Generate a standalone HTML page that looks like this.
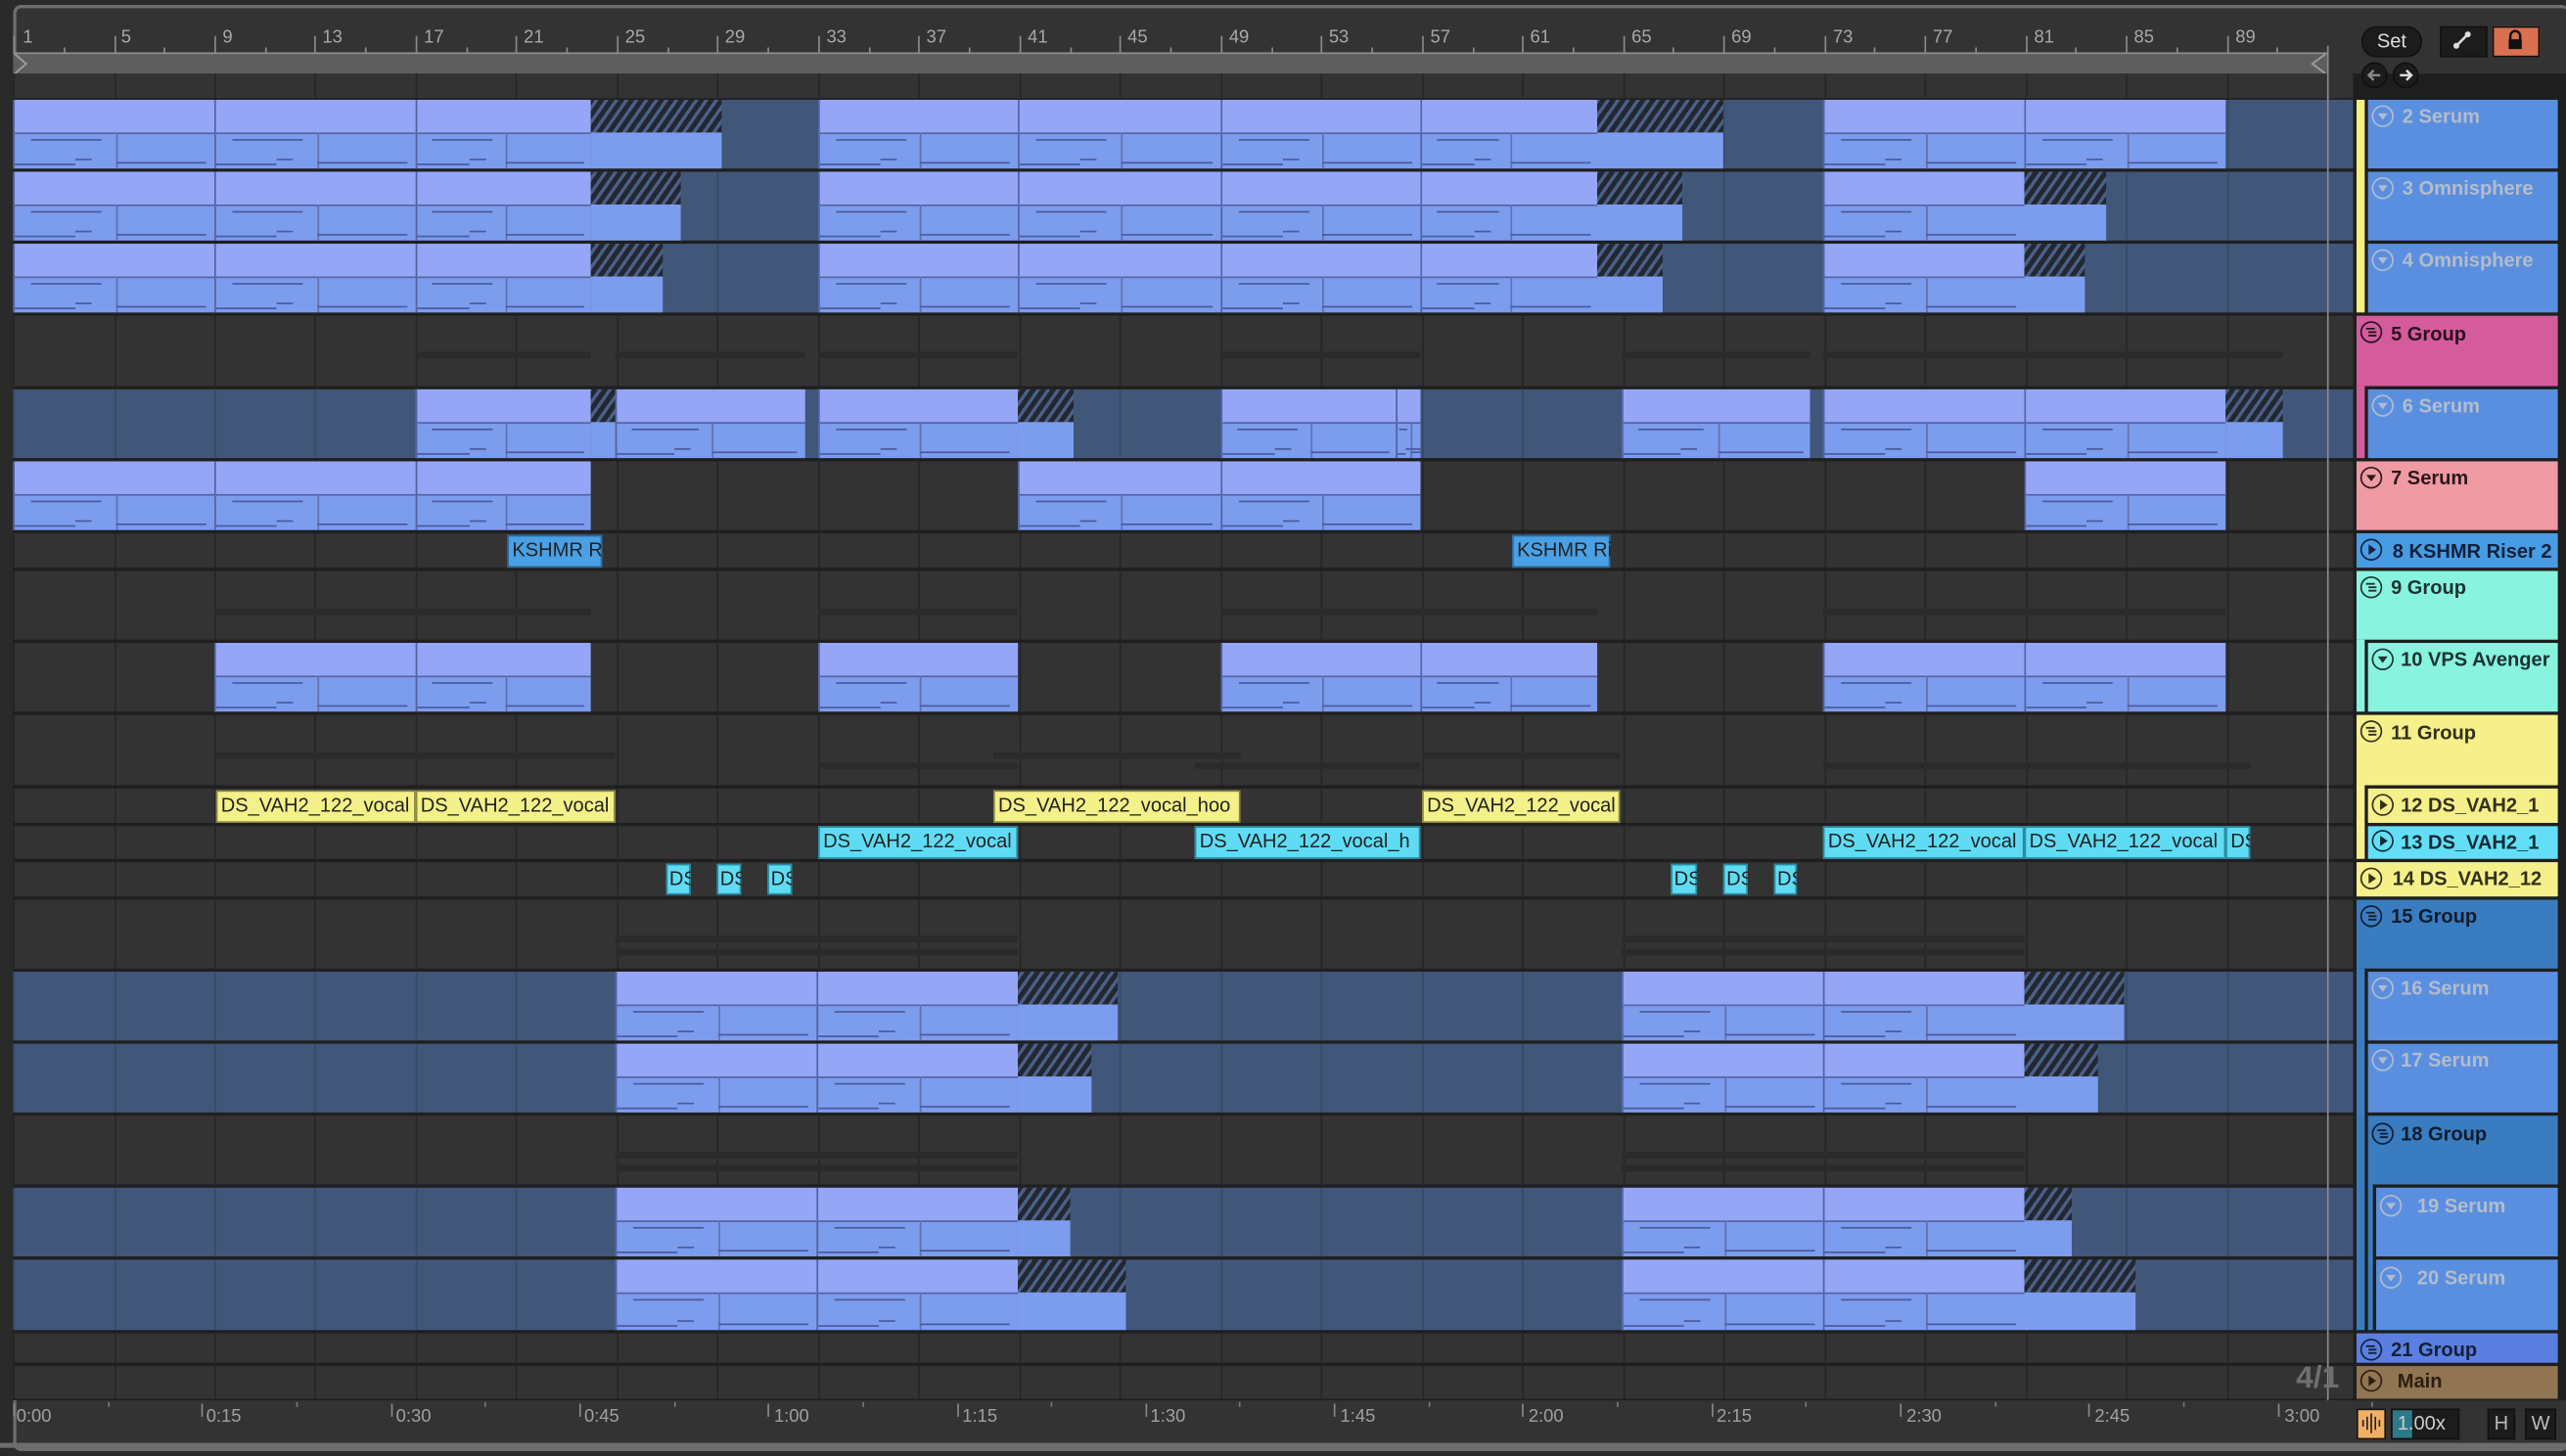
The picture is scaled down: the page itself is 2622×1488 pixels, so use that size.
<!DOCTYPE html>
<html><head><meta charset="utf-8">
<style>
html,body{margin:0;padding:0;background:#262626;overflow:hidden;width:2622px;height:1488px}
#st{position:absolute;left:0;top:0;width:1568px;height:890px;transform:scale(1.67219,1.67191);transform-origin:0 0;background:#2a2a2a;font-family:"Liberation Sans",sans-serif}
.a{position:absolute}
.frame{left:8px;top:3px;width:1560px;height:880px;border:2px solid #6e6e6e;border-radius:5px;border-right:none;background:#333}
.rn{position:absolute;top:17px;font-size:11px;color:#a8a8a8}
.tn{position:absolute;top:860px;font-size:11px;color:#a0a0a0}
.tk{position:absolute;width:1px;background:#8a8a8a}
.lbl{position:absolute;font-size:12px;font-weight:bold;white-space:nowrap;line-height:14px}
.clipt{position:absolute;font-size:12px;color:#222;white-space:nowrap;overflow:hidden;line-height:19px;padding-left:3px;box-sizing:border-box}
.ic{position:absolute;width:14px;height:14px}
</style></head><body>
<div id="st">
<div class="a frame"></div>
<div class="a" style="left:8px;top:32px;width:1415px;height:12px;background:#5e5e5e;border-top:1px solid #909090;border-bottom:1px solid #909090"></div>
<svg class="a" style="left:8px;top:32px" width="12" height="14"><path d="M1 1 L8 7 L1 13" fill="none" stroke="#9a9a9a" stroke-width="1.2"/></svg>
<svg class="a" style="left:1410px;top:32px" width="12" height="14"><path d="M11 1 L3 7 L11 13" fill="none" stroke="#9a9a9a" stroke-width="1.2"/></svg>
<div id="ruler"></div>
<div id="rows"></div>
<div id="clips"></div>
<div class="clipt" style="left:310px;top:327px;width:58px;height:20px">KSHMR Ri</div>
<div class="clipt" style="left:924px;top:327px;width:60px;height:20px">KSHMR Ri</div>
<div class="clipt" style="left:132px;top:483px;width:122px">DS_VAH2_122_vocal</div>
<div class="clipt" style="left:254px;top:483px;width:122px">DS_VAH2_122_vocal</div>
<div class="clipt" style="left:607px;top:483px;width:151px">DS_VAH2_122_vocal_hoo</div>
<div class="clipt" style="left:869px;top:483px;width:121px">DS_VAH2_122_vocal</div>
<div class="clipt" style="left:500px;top:505px;width:122px">DS_VAH2_122_vocal</div>
<div class="clipt" style="left:730px;top:505px;width:138px">DS_VAH2_122_vocal_h</div>
<div class="clipt" style="left:1114px;top:505px;width:123px">DS_VAH2_122_vocal</div>
<div class="clipt" style="left:1237px;top:505px;width:123px">DS_VAH2_122_vocal</div>
<div class="clipt" style="left:1360px;top:505px;width:15px">DS</div>
<div class="clipt" style="left:407px;top:528px;width:15px;padding-left:2px">DS</div>
<div class="clipt" style="left:438px;top:528px;width:15px;padding-left:2px">DS</div>
<div class="clipt" style="left:469px;top:528px;width:15px;padding-left:2px">DS</div>
<div class="clipt" style="left:1021px;top:528px;width:16px;padding-left:2px">DS</div>
<div class="clipt" style="left:1053px;top:528px;width:15px;padding-left:2px">DS</div>
<div class="clipt" style="left:1084px;top:528px;width:14px;padding-left:2px">DS</div>
<div class="a" style="left:1422px;top:28px;width:1px;height:828px;background:#8c8c8c"></div>
<div class="a" style="left:1403px;top:832px;font-size:19px;font-weight:bold;color:#6f6f6f">4/1</div>
<div id="panel"></div>
<div id="icons"></div>
<div class="lbl" style="left:1468px;top:64px;color:#b3bccc">2 Serum</div>
<div class="lbl" style="left:1468px;top:108px;color:#b3bccc">3 Omnisphere</div>
<div class="lbl" style="left:1468px;top:152px;color:#b3bccc">4 Omnisphere</div>
<div class="lbl" style="left:1461px;top:197px;color:#2a1020">5 Group</div>
<div class="lbl" style="left:1468px;top:241px;color:#b3bccc">6 Serum</div>
<div class="lbl" style="left:1461px;top:285px;color:#2a1a1a">7 Serum</div>
<div class="lbl" style="left:1462px;top:330px;color:#11223a">8 KSHMR Riser 2</div>
<div class="lbl" style="left:1461px;top:352px;color:#1c3330">9 Group</div>
<div class="lbl" style="left:1467px;top:396px;color:#1c3330">10 VPS Avenger</div>
<div class="lbl" style="left:1461px;top:441px;color:#33301a">11 Group</div>
<div class="lbl" style="left:1467px;top:485px;color:#33301a">12 DS_VAH2_1</div>
<div class="lbl" style="left:1467px;top:508px;color:#102a33">13 DS_VAH2_1</div>
<div class="lbl" style="left:1462px;top:530px;color:#33301a">14 DS_VAH2_12</div>
<div class="lbl" style="left:1461px;top:553px;color:#0f1c2e">15 Group</div>
<div class="lbl" style="left:1467px;top:597px;color:#b3bccc">16 Serum</div>
<div class="lbl" style="left:1467px;top:641px;color:#b3bccc">17 Serum</div>
<div class="lbl" style="left:1467px;top:686px;color:#0f1c2e">18 Group</div>
<div class="lbl" style="left:1477px;top:730px;color:#b3bccc">19 Serum</div>
<div class="lbl" style="left:1477px;top:774px;color:#b3bccc">20 Serum</div>
<div class="lbl" style="left:1461px;top:818px;color:#14203a">21 Group</div>
<div class="lbl" style="left:1465px;top:837px;color:#2a1e10">Main</div>
<div class="a" style="left:1443px;top:16px;width:35px;height:17px;border-radius:9px;background:#1c1c1c;border:1px solid #111;color:#ddd;font-size:12px;text-align:center;line-height:17px">Set</div>
<div class="a" style="left:1491px;top:16px;width:27px;height:17px;background:#1c1c1c;border:1px solid #111"></div>
<svg class="a" style="left:1498px;top:18px" width="14" height="13"><path d="M3 10 L10 3" stroke="#ddd" stroke-width="1.5"/><circle cx="3" cy="10" r="1.8" fill="#ddd"/><circle cx="10" cy="3" r="1.8" fill="#ddd"/></svg>
<div class="a" style="left:1523px;top:16px;width:27px;height:17px;background:#d9704f;border:1px solid #111"></div>
<svg class="a" style="left:1530px;top:17px" width="14" height="14"><path d="M4 7 V5 a3 3 0 0 1 6 0 V7" fill="none" stroke="#111" stroke-width="1.5"/><rect x="3" y="7" width="8" height="6" fill="#111"/></svg>
<svg class="a" style="left:1442px;top:37px" width="40" height="18"><circle cx="9" cy="9" r="7.5" fill="#1c1c1c" stroke="#111"/><circle cx="28" cy="9" r="7.5" fill="#1c1c1c" stroke="#111"/><path d="M12.5 9 H6 M8.5 6 L5.5 9 L8.5 12" stroke="#888" stroke-width="1.5" fill="none"/><path d="M24.5 9 H31 M28.5 6 L31.5 9 L28.5 12" stroke="#ddd" stroke-width="1.5" fill="none"/></svg>
<div class="a" style="left:1440px;top:861px;width:16px;height:17px;background:#f2b064;border:1px solid #111"></div>
<svg class="a" style="left:1441px;top:862px" width="16" height="16"><path d="M3 6v4M5.5 4v8M8 2v12M10.5 4v8M13 6v4" stroke="#222" stroke-width="1"/></svg>
<div class="a" style="left:1461px;top:861px;width:40px;height:17px;background:#1c1c1c;border:1px solid #111;overflow:hidden"><div class="a" style="left:0;top:0;width:12px;height:17px;background:#2b7a8a"></div><div class="a" style="left:3px;top:1px;font-size:12px;color:#ccc">1.00x</div></div>
<div class="a" style="left:1520px;top:861px;width:15px;height:17px;background:#1c1c1c;border:1px solid #111;color:#bbb;font-size:12px;text-align:center;line-height:17px">H</div>
<div class="a" style="left:1543px;top:861px;width:17px;height:17px;background:#1c1c1c;border:1px solid #111;color:#bbb;font-size:12px;text-align:center;line-height:17px">W</div>
<div class="a" style="left:0;top:882px;width:1568px;height:3px;background:#6e6e6e"></div>
<div class="tn" style="left:10px">0:00</div><div class="tn" style="left:126px">0:15</div><div class="tn" style="left:242px">0:30</div><div class="tn" style="left:357px">0:45</div><div class="tn" style="left:473px">1:00</div><div class="tn" style="left:588px">1:15</div><div class="tn" style="left:703px">1:30</div><div class="tn" style="left:819px">1:45</div><div class="tn" style="left:934px">2:00</div><div class="tn" style="left:1049px">2:15</div><div class="tn" style="left:1165px">2:30</div><div class="tn" style="left:1280px">2:45</div><div class="tn" style="left:1396px">3:00</div>
<div class="rn" style="left:14px">1</div><div class="rn" style="left:74px">5</div><div class="rn" style="left:136px">9</div><div class="rn" style="left:197px">13</div><div class="rn" style="left:259px">17</div><div class="rn" style="left:320px">21</div><div class="rn" style="left:382px">25</div><div class="rn" style="left:443px">29</div><div class="rn" style="left:505px">33</div><div class="rn" style="left:566px">37</div><div class="rn" style="left:628px">41</div><div class="rn" style="left:689px">45</div><div class="rn" style="left:751px">49</div><div class="rn" style="left:812px">53</div><div class="rn" style="left:874px">57</div><div class="rn" style="left:935px">61</div><div class="rn" style="left:997px">65</div><div class="rn" style="left:1058px">69</div><div class="rn" style="left:1120px">73</div><div class="rn" style="left:1181px">77</div><div class="rn" style="left:1243px">81</div><div class="rn" style="left:1304px">85</div><div class="rn" style="left:1366px">89</div>
</div>
<script>
(function(){
var X=function(b){return 8+(b-1)*15.37;};
var R=document.getElementById('ruler'),h='';
for(var b=1;b<=92;b+=2){var x=X(b);var big=(b-1)%4==0;h+='<div class="tk" style="left:'+x.toFixed(1)+'px;top:'+(big?22:29)+'px;height:'+(big?10:3)+'px"></div>';}
for(var t=0;t<=12;t++){var x=8+t*115.3;h+='<div class="tk" style="left:'+x.toFixed(1)+'px;top:858px;height:8px;background:#888"></div>';h+='<div class="tk" style="left:'+(x+57.6).toFixed(1)+'px;top:857px;height:3px;background:#777"></div>';}
R.innerHTML=h;
var rows=[[45,60,'d'],[61,103,'b'],[105,147,'b'],[149,191,'b'],[193,236,'g'],[238,280,'b'],[282,324,'d'],[326,347,'d'],[349,391,'g'],[393,435,'d'],[437,480,'g'],[482,503,'d'],[505,525,'d'],[527,548,'d'],[550,592,'g'],[594,636,'b'],[638,680,'b'],[682,724,'g'],[726,768,'b'],[770,813,'b'],[815,833,'d'],[835,855,'d']];
var H='';
H+='<div class="a" style="left:8px;top:45px;width:1432px;height:811px;background:#1f1f1f"></div>';
rows.forEach(function(r){
 var bg=r[2]=='b'?'#41577a':'#333333';
 H+='<div class="a" style="left:8px;top:'+r[0]+'px;width:1430px;height:'+(r[1]-r[0])+'px;background:'+bg+'"></div>';
 for(var b=1;b<=93;b+=4){H+='<div class="a" style="left:'+X(b).toFixed(1)+'px;top:'+r[0]+'px;width:1px;height:'+(r[1]-r[0])+'px;background:'+(r[2]=='b'?'#374a68':'#262626')+'"></div>';}
});
function band(x1,x2,y){H+='<div class="a" style="left:'+x1+'px;top:'+y+'px;width:'+(x2-x1)+'px;height:4px;background:#2a2a2a"></div>';}
band(254,361,215);band(376,492,215);band(500,622,215);band(746,868,215);band(991,1106,215);band(1114,1395,215);
band(131,361,372);band(500,622,372);band(746,976,372);band(1114,1360,372);
band(132,376,460);band(500,622,466);band(607,758,460);band(730,868,466);band(869,990,460);band(1114,1375,466);
band(376,622,572);band(376,622,580);band(991,1237,572);band(991,1237,580);
band(376,622,704);band(376,622,712);band(991,1237,704);band(991,1237,712);
document.getElementById('rows').innerHTML=H;
var C='';
function clip(x1,x2,t,b){var m=t+Math.round((b-t)*0.47);var w=x2-x1;
 C+='<div class="a" style="left:'+x1+'px;top:'+t+'px;width:'+w+'px;height:'+(b-t)+'px;background:#7c9cee;border-left:1px solid #5462a0;box-sizing:border-box;overflow:hidden">'+
 '<div class="a" style="left:0;top:0;right:0;height:'+(m-t)+'px;background:#95a6f7;border-bottom:1px solid #5462a0"></div>'+
 '<div class="a" style="left:'+Math.round(w*0.5)+'px;top:'+(m-t)+'px;width:1px;bottom:0;background:#6070b0"></div>'+
 '<div class="a" style="left:0;top:'+(b-t-3)+'px;width:'+Math.round(w*0.3)+'px;height:1px;background:#4a5a9a"></div>'+
 '<div class="a" style="left:'+Math.round(w*0.3)+'px;top:'+(b-t-6)+'px;width:10px;height:1px;background:#4a5a9a"></div>'+
 '<div class="a" style="left:'+Math.round(w*0.5)+'px;top:'+(b-t-4)+'px;width:'+Math.round(w*0.45)+'px;height:1px;background:#4a5a9a"></div>'+
 '<div class="a" style="left:'+Math.round(w*0.08)+'px;top:'+(m-t+4)+'px;width:'+Math.round(w*0.35)+'px;height:1px;background:#4a5a9a"></div></div>';}
function hatch(x1,x2,t,b){var m=t+Math.round((b-t)*0.47);
 C+='<div class="a" style="left:'+x1+'px;top:'+t+'px;width:'+(x2-x1)+'px;height:'+(m-t)+'px;background:repeating-linear-gradient(-55deg,#23272f 0 3px,#4a6088 3px 5px)"></div>';
 C+='<div class="a" style="left:'+x1+'px;top:'+m+'px;width:'+(x2-x1)+'px;height:'+(b-m)+'px;background:#7c9cee"></div>';}
function sq(x1,x2,t,b,c,bc){C+='<div class="a" style="left:'+x1+'px;top:'+t+'px;width:'+(x2-x1)+'px;height:'+(b-t)+'px;background:'+c+';border:1px solid '+bc+';box-sizing:border-box"></div>';}
[[61,103,441,1053,0],[105,147,416,1028,1287],[149,191,405,1016,1274]].forEach(function(r){
 clip(8,131,r[0],r[1]);clip(131,254,r[0],r[1]);clip(254,361,r[0],r[1]);hatch(361,r[2],r[0],r[1]);
 clip(500,622,r[0],r[1]);clip(622,746,r[0],r[1]);clip(746,868,r[0],r[1]);clip(868,976,r[0],r[1]);hatch(976,r[3],r[0],r[1]);
 clip(1114,1237,r[0],r[1]);if(r[4])hatch(1237,r[4],r[0],r[1]);else clip(1237,1360,r[0],r[1]);
});
clip(254,361,238,280);hatch(361,376,238,280);clip(376,492,238,280);clip(500,622,238,280);hatch(622,656,238,280);
clip(746,853,238,280);clip(853,868,238,280);clip(991,1106,238,280);clip(1114,1237,238,280);clip(1237,1360,238,280);hatch(1360,1395,238,280);
clip(8,131,282,324);clip(131,254,282,324);clip(254,361,282,324);clip(622,746,282,324);clip(746,868,282,324);clip(1237,1360,282,324);
sq(310,368,327,347,'#4aa0e4','#2a6aa0');sq(924,984,327,347,'#4aa0e4','#2a6aa0');
clip(131,254,393,435);clip(254,361,393,435);clip(500,622,393,435);clip(746,868,393,435);clip(868,976,393,435);clip(1114,1237,393,435);clip(1237,1360,393,435);
[[132,254],[254,376],[607,758],[869,990]].forEach(function(p){sq(p[0],p[1],483,503,'#f4f08a','#8a8640');});
[[500,622],[730,868],[1114,1237],[1237,1360],[1360,1375]].forEach(function(p){sq(p[0],p[1],505,525,'#5fdcf4','#2a8aa0');});
[[407,422],[438,453],[469,484],[1021,1037],[1053,1068],[1084,1098]].forEach(function(p){sq(p[0],p[1],528,547,'#5fdcf4','#2a8aa0');});
[[594,636,683,1298],[638,680,667,1282],[726,768,654,1266],[770,813,688,1305]].forEach(function(r){
 clip(376,499,r[0],r[1]);clip(499,622,r[0],r[1]);hatch(622,r[2],r[0],r[1]);
 clip(991,1114,r[0],r[1]);clip(1114,1237,r[0],r[1]);hatch(1237,r[3],r[0],r[1]);
});
document.getElementById('clips').innerHTML=C;
var P='<div class="a" style="left:1438px;top:45px;width:130px;height:811px;background:#1e1e1e"></div>';
function blk(x,t,b,c,x2){x2=x2||1563;P+='<div class="a" style="left:'+x+'px;top:'+t+'px;width:'+(x2-x)+'px;height:'+(b-t)+'px;background:'+c+'"></div>';}
blk(1440,61,191,'#f5f07a',1445);
blk(1447,61,103,'#5a8fe0');blk(1447,105,147,'#5a8fe0');blk(1447,149,191,'#5a8fe0');
blk(1440,193,236,'#d45c9c');blk(1440,236,280,'#d45c9c',1445);blk(1447,238,280,'#5a8fe0');
blk(1440,282,324,'#f09aa4');
blk(1440,326,347,'#489ce4');
blk(1440,349,391,'#88f4e0');blk(1440,391,435,'#88f4e0',1445);blk(1447,393,435,'#88f4e0');
blk(1440,437,480,'#f5f08a');blk(1440,480,525,'#f5f08a',1445);blk(1447,482,503,'#f5f08a');blk(1447,505,525,'#62dff6');
blk(1440,527,548,'#f5f08a');
blk(1440,550,592,'#3a7cc0');blk(1440,592,813,'#3a7cc0',1445);
blk(1447,594,636,'#5a8fe0');blk(1447,638,680,'#5a8fe0');
blk(1447,682,724,'#3a7cc0');blk(1447,724,813,'#3a7cc0',1450);
blk(1452,726,768,'#5a8fe0');blk(1452,770,813,'#5a8fe0');
blk(1440,815,833,'#5b7fe0');
blk(1440,835,855,'#917452');
document.getElementById('panel').innerHTML=P;
var I='';
function ic(x,y,type,col){
 var s='<svg class="ic" style="left:'+x+'px;top:'+y+'px" viewBox="0 0 14 14"><circle cx="7" cy="7" r="6.2" fill="none" stroke="'+col+'" stroke-width="1"/>';
 if(type=='d')s+='<path d="M4 5.3 L10 5.3 L7 9.3Z" fill="'+col+'"/>';
 if(type=='p')s+='<path d="M5.4 3.8 L10 7 L5.4 10.2Z" fill="'+col+'"/>';
 if(type=='g')s+='<path d="M3.8 4.9H9.2M5.3 7H10.2M5.3 9.1H10.2" stroke="'+col+'" stroke-width="1.1"/>';
 I+=s+'</svg>';}
ic(1449,64,'d','#b3bccc');ic(1449,108,'d','#b3bccc');ic(1449,152,'d','#b3bccc');
ic(1442,196,'g','#2a1020');ic(1449,241,'d','#b3bccc');ic(1442,285,'d','#2a1a1a');
ic(1442,329,'p','#11223a');ic(1442,352,'g','#1c3330');ic(1449,396,'d','#1c3330');
ic(1442,440,'g','#33301a');ic(1449,485,'p','#33301a');ic(1449,507,'p','#102a33');ic(1442,530,'p','#33301a');
ic(1442,553,'g','#0f1c2e');ic(1449,597,'d','#b3bccc');ic(1449,641,'d','#b3bccc');ic(1449,686,'g','#0f1c2e');
ic(1454,730,'d','#b3bccc');ic(1454,774,'d','#b3bccc');ic(1442,818,'g','#14203a');ic(1442,837,'p','#2a1e10');
document.getElementById('icons').innerHTML=I;
})();
</script>
</body></html>
